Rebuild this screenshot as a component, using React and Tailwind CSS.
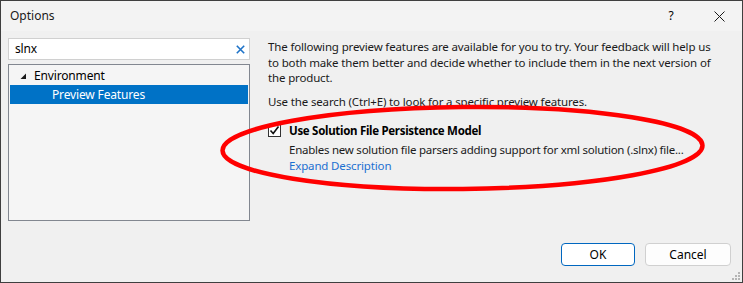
import React from "react";

export default function App() {
  const font = { fontFamily: '"Noto Sans", "Open Sans", sans-serif' };
  return (
    <div
      className="relative w-[743px] h-[283px] border border-[#3f3f3f] bg-[#f0f0f0] text-[11.5px] tracking-[-0.15px] text-black flex flex-col overflow-hidden"
      style={font}
    >
      {/* Title bar */}
      <div className="h-[30px] bg-[#f3f3f3] flex items-center pl-[9px] shrink-0">
        <span className="text-[12px] tracking-normal text-[#1a1a1a]">Options</span>
        <div className="ml-auto flex items-center">
          <span className="w-[46px] text-center text-[12px] mr-[2px]">?</span>
          <span className="w-[46px] flex justify-center">
            <svg width="11" height="11" viewBox="0 0 11 11">
              <path d="M0.5 0.5 L10.5 10.5 M10.5 0.5 L0.5 10.5" stroke="#1a1a1a" strokeWidth="1" />
            </svg>
          </span>
        </div>
      </div>

      {/* Body */}
      <div className="flex flex-1 min-h-0">
        {/* Left column */}
        <div className="w-[249px] pl-[7px] pt-[7px] flex flex-col shrink-0">
          <div className="h-[22px] bg-white border border-[#d0d0d0] flex items-center pl-[6px] pr-[4px]">
            <span className="text-[12px] leading-none">slnx</span>
            <svg className="ml-auto" width="9" height="9" viewBox="0 0 9 9">
              <path d="M0.8 0.8 L8.2 8.2 M8.2 0.8 L0.8 8.2" stroke="#1e73c8" strokeWidth="1.6" />
            </svg>
          </div>
          <div className="mt-[4px] h-[157px] bg-[#f5f5f5] border border-[#828790] p-[1px]">
            <div className="h-[19px] flex items-center pl-[9px]">
              <svg width="8" height="8" viewBox="0 0 8 8">
                <path d="M7 1.5 L7 7 L1.5 7 Z" fill="#1a1a1a" />
              </svg>
              <span className="ml-[7px] text-[12px]">Environment</span>
            </div>
            <div className="h-[19px] bg-[#0072c6] text-white text-[12px] flex items-center pl-[42px]">
              Preview Features
            </div>
          </div>
        </div>

        {/* Right column */}
        <div className="flex-1 pl-[18px] pr-[20px] pt-[8px] flex flex-col">
          <p className="leading-[15.5px] text-[#1a1a1a]">
            The following preview features are available for you to try. Your feedback will help us to both make them better and decide whether to include them in the next version of the product.
          </p>
          <p className="mt-[8px] leading-[15.5px] text-[#1a1a1a]">
            Use the search (Ctrl+E) to look for a specific preview features.
          </p>
          <div className="mt-[14px] flex items-start">
            <div className="mt-[1px] w-[13px] h-[13px] bg-white border border-[#333] flex items-center justify-center shrink-0">
              <svg width="11" height="11" viewBox="0 0 11 11">
                <path d="M1.5 5.5 L4.2 8.5 L9.5 1.5" stroke="#111" strokeWidth="1.6" fill="none" />
              </svg>
            </div>
            <div className="ml-[8px] flex flex-col">
              <span className="font-bold tracking-[-0.3px] leading-[16px]">Use Solution File Persistence Model</span>
              <span className="mt-[3px] leading-[16px] tracking-[-0.25px] text-[#1a1a1a]">
                Enables new solution file parsers adding support for xml solution (.slnx) file...
              </span>
              <span className="leading-[16px] text-[#1c6fd0]">Expand Description</span>
            </div>
          </div>
          <div className="mt-auto mb-[16px] mr-[-9px] flex justify-end gap-[10px]">
            <button className="w-[74px] h-[23px] bg-white border border-[#0067c0] rounded-[4px] text-[12px] tracking-normal">OK</button>
            <button className="w-[86px] h-[23px] bg-[#fdfdfd] border border-[#d0d0d0] rounded-[4px] text-[12px] tracking-normal">Cancel</button>
          </div>
        </div>
      </div>

      {/* Resize grip */}
      <svg className="absolute right-[1px] bottom-[1px]" width="10" height="10" viewBox="0 0 10 10">
        {[[8, 2], [8, 5], [8, 8], [5, 5], [5, 8], [2, 8]].map(([x, y], i) => (
          <rect key={i} x={x - 1} y={y - 1} width="2" height="2" fill="#b5b5b5" />
        ))}
      </svg>

      {/* Red annotation ellipse */}
      <svg className="absolute left-0 top-0 pointer-events-none" width="743" height="283" viewBox="0 0 743 283">
        <ellipse cx="461.5" cy="147" rx="240" ry="41" fill="none" stroke="#ff0000" strokeWidth="4.5" transform="rotate(-0.6 461.5 147)" />
      </svg>
    </div>
  );
}
